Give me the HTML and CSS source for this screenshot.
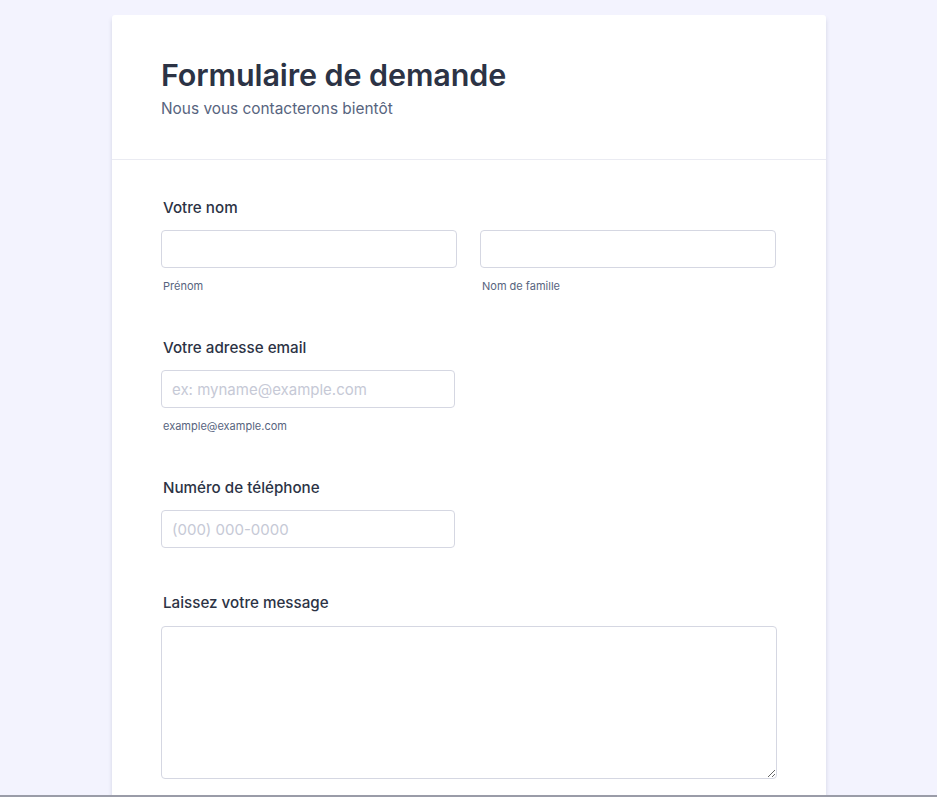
FILE: index.html
```html
<!DOCTYPE html>
<html lang="fr">
<head>
<meta charset="utf-8">
<link rel="stylesheet" href="styles.css">
</head>
<body>
<main class="card">
  <header class="head">
    <h1 class="title">Formulaire de demande</h1>
    <p class="subtitle">Nous vous contacterons bientôt</p>
  </header>
  <section class="body">
    <div class="field">
      <div class="label">Votre nom</div>
      <div class="row">
        <div class="col">
          <input class="input" type="text">
          <div class="sub">Prénom</div>
        </div>
        <div class="col">
          <input class="input" type="text">
          <div class="sub">Nom de famille</div>
        </div>
      </div>
    </div>
    <div class="field">
      <div class="label">Votre adresse email</div>
      <div class="col narrow">
        <input class="input" type="email" placeholder="ex: myname@example.com">
        <div class="sub">example@example.com</div>
      </div>
    </div>
    <div class="field phone">
      <div class="label">Numéro de téléphone</div>
      <div class="col narrow">
        <input class="input" type="tel" placeholder="(000) 000-0000">
      </div>
    </div>
    <div class="field last">
      <div class="label">Laissez votre message</div>
      <textarea class="textarea"></textarea>
    </div>
  </section>
</main>
<div class="bottom-line"></div>
</body>
</html>
```
FILE: styles.css
```css
* { box-sizing: border-box; }
html, body { margin: 0; padding: 0; }
body {
  background: #f3f3fe;
  font-family: Inter, "Noto Sans", sans-serif;
  color: #2c3345;
  padding-top: 15px;
  height: 797px;
  overflow: hidden;
}
.card {
  width: 714px;
  margin-left: 112px;
  background: #fff;
  border-radius: 3px;
  box-shadow: 0 4px 4px rgba(87, 100, 126, 0.21);
  min-height: 800px;
}
.head {
  padding: 41px 49px 39px;
  border-bottom: 1px solid #eaebf2;
}
.title {
  margin: 0;
  font-size: 30.5px;
  font-weight: 600;
  line-height: 38px;
  letter-spacing: -0.1px;
  color: #2c3345;
}
.subtitle {
  margin: 4px 0 0;
  font-size: 15.4px;
  line-height: 22px;
  color: #57647e;
}
.body {
  padding: 38px 49px 0 49px;
  display: flex;
  flex-direction: column;
  gap: 44px;
}
.field { display: flex; flex-direction: column; }
.field.phone { margin-bottom: 1px; }
.label {
  font-size: 15.2px;
  font-weight: 500;
  line-height: 20px;
  padding-left: 2px;
  margin-bottom: 12px;
  color: #2c3345;
}
.row { display: flex; gap: 23px; }
.col { display: flex; flex-direction: column; width: 296px; }
.col.narrow { width: 294px; }
.input {
  width: 100%;
  height: 38px;
  border: 1px solid #d5d7e2;
  border-radius: 4px;
  padding: 0 10px;
  font-family: Inter, "Noto Sans", sans-serif;
  font-size: 15px;
  color: #2c3345;
  background: #fff;
  outline: none;
}
.input::placeholder { color: #c6c9d6; }
.sub {
  margin-top: 11px;
  padding-left: 2px;
  font-size: 11px;
  line-height: 15px;
  color: #57647e;
}
.field.last .label { margin-bottom: 13px; }
.textarea {
  width: 616px;
  height: 153px;
  border: 1px solid #d5d7e2;
  border-radius: 4px;
  resize: vertical;
  font-family: Inter, "Noto Sans", sans-serif;
  outline: none;
}
.bottom-line {
  position: fixed;
  left: 0;
  right: 0;
  bottom: 0;
  height: 2px;
  background: #9a9ca8;
}
```
